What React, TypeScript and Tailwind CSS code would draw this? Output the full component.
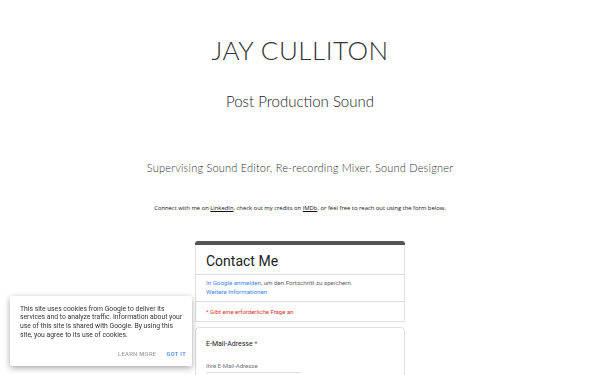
export default function App() {
  return (
    <div className="relative min-h-[375px] bg-white font-['Lato',sans-serif] text-[#212121]">
      {/* Header */}
      <div className="flex flex-col items-center pt-[34px]">
        <h1 className="text-[26px] leading-[32px] font-light tracking-[0.5px] text-[#333]">JAY CULLITON</h1>
        <p className="mt-[25px] text-[15px] leading-[20px] font-light text-[#222]">Post Production Sound</p>
        <p className="mt-[49px] text-[11px] leading-[16px] font-light tracking-[0.2px] text-[#333]">
          Supervising Sound Editor, Re-recording Mixer, Sound Designer
        </p>
        <p className="mt-[28px] font-['Open_Sans',sans-serif] text-[5.85px] leading-[9px] text-[#111]">
          Connect with me on <span className="underline">LinkedIn</span>, check out my credits on{" "}
          <span className="underline">IMDb</span>, or feel free to reach out using the form below.
        </p>
      </div>

      {/* Form embed */}
      <div className="mx-auto mt-[28px] w-[210px] font-['Roboto',sans-serif]">
        <div className="rounded-t-[3px] border border-t-0 border-[#e0e0e0] bg-white">
          <div className="h-[4px] -mx-px rounded-t-[3px] bg-[#555]" />
          <div className="px-[10px] pt-[7px] pb-[4px] text-[14px] leading-[18px] text-[#202124]">Contact Me</div>
          <div className="border-t border-[#e0e0e0] px-[10px] py-[4px] text-[6.2px] leading-[9px] text-[#5f6368]">
            <div>
              <span className="text-[#4285f4]">In Google anmelden</span>, um den Fortschritt zu speichern.
            </div>
            <div className="text-[#4285f4]">Weitere Informationen</div>
          </div>
          <div className="border-t border-[#e0e0e0] px-[10px] py-[4px] text-[6px] leading-[11px] text-[#d93025]">
            * Gibt eine erforderliche Frage an
          </div>
        </div>
        <div className="mt-[5px] rounded-[4px] border border-[#e0e0e0] bg-white px-[10px] pt-[11px] pb-[20px]">
          <div className="text-[7px] leading-[10px] text-[#202124]">
            E-Mail-Adresse <span className="text-[#d93025]">*</span>
          </div>
          <div className="mt-[12px] w-[95px] border-b border-[#e0e0e0] pb-[2px] text-[6px] leading-[9px] text-[#70757a]">
            Ihre E-Mail-Adresse
          </div>
        </div>
      </div>

      {/* Cookie notice */}
      <div className="fixed bottom-[9px] left-[10px] w-[182px] rounded-[2px] bg-white pl-[10px] pr-[6px] pt-[9px] pb-[7px] font-['Roboto',sans-serif] shadow-[0_2px_6px_rgba(0,0,0,0.35)]">
        <p className="whitespace-nowrap text-[6.8px] leading-[8.7px] text-[#333]">
          This site uses cookies from Google to deliver its
          <br />
          services and to analyze traffic. Information about your
          <br />
          use of this site is shared with Google. By using this
          <br />
          site, you agree to its use of cookies.
        </p>
        <div className="mt-[11px] flex justify-end gap-[10px] text-[5.8px] font-medium tracking-[0.3px]">
          <span className="text-[#9e9e9e]">LEARN MORE</span>
          <span className="text-[#4285f4]">GOT IT</span>
        </div>
      </div>
    </div>
  );
}
